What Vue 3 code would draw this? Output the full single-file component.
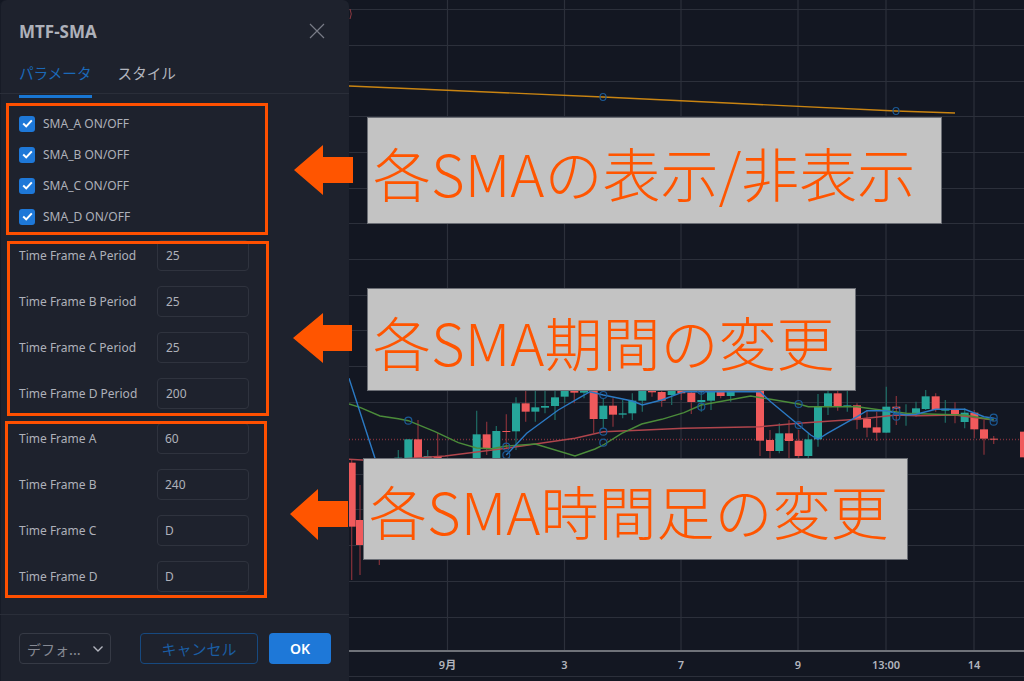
<script setup>
const checks = ['SMA_A ON/OFF', 'SMA_B ON/OFF', 'SMA_C ON/OFF', 'SMA_D ON/OFF']
const periods = [['Time Frame A Period', '25'], ['Time Frame B Period', '25'], ['Time Frame C Period', '25'], ['Time Frame D Period', '200']]
const frames = [['Time Frame A', '60'], ['Time Frame B', '240'], ['Time Frame C', 'D'], ['Time Frame D', 'D']]

const gridX = [447.5, 564.5, 681, 798, 886, 974]
const gridY = [9, 45, 81, 116, 152, 188, 223, 259, 295, 330, 366, 402, 474, 509, 545, 581, 617]
const ticks = [['9月', 447.5], ['3', 564.5], ['7', 681], ['9', 798], ['13:00', 886], ['14', 974]]

// [x, bodyTop, bodyBottom, wickTop, wickBottom, up] in crop units (3x), origin per block
const raw3 = [
  [20, 278, 470, 270, 630, 0], [45, 450, 525, 345, 615, 0], [103, 500, 520, 500, 585, 0],
  [160, 263, 280, 240, 280, 1], [190, 208, 280, 208, 280, 1], [219, 208, 280, 150, 280, 0],
  [248, 258, 280, 240, 280, 1], [278, 258, 280, 190, 280, 0], [395, 193, 280, 122, 280, 1],
  [425, 193, 235, 155, 255, 0], [454, 183, 280, 168, 280, 1], [484, 183, 186, 133, 235, 0],
  [513, 100, 184, 82, 240, 1], [542, 100, 125, 60, 155, 0], [571, 112, 125, 60, 155, 1],
  [600, 108, 113, 60, 130, 1], [630, 82, 108, 60, 150, 1], [659, 50, 80, 50, 100, 1],
  [688, 50, 68, 50, 100, 0], [717, 50, 68, 50, 85, 1], [746, 50, 147, 50, 190, 0],
  [775, 107, 147, 85, 175, 1], [804, 107, 134, 85, 170, 0], [833, 130, 134, 90, 145, 1],
  [862, 92, 130, 70, 150, 1], [892, 50, 92, 50, 125, 1], [921, 50, 67, 50, 80, 0],
  [950, 66, 92, 50, 110, 0], [980, 50, 75, 50, 105, 1], [1009, 50, 70, 50, 90, 0]
]
const raw4 = [
  [22, 68, 96, 50, 132, 0], [52, 90, 96, 50, 125, 1], [81, 50, 92, 50, 120, 1], [110, 50, 78, 50, 85, 0],
  [140, 50, 78, 50, 95, 1], [228, 50, 212, 50, 258, 0], [258, 210, 243, 180, 280, 0], [286, 190, 243, 160, 250, 1],
  [315, 190, 213, 150, 280, 0], [344, 212, 258, 180, 280, 0], [373, 208, 258, 190, 280, 1], [402, 108, 208, 72, 230, 1],
  [432, 70, 110, 50, 135, 1], [461, 70, 110, 50, 122, 0], [490, 106, 110, 50, 125, 1], [519, 106, 148, 100, 178, 0],
  [549, 147, 173, 120, 202, 0], [578, 172, 188, 125, 213, 0], [607, 110, 188, 50, 188, 1], [637, 110, 116, 78, 165, 0],
  [666, 133, 137, 103, 167, 1], [696, 115, 133, 95, 140, 1], [725, 79, 117, 60, 120, 1], [755, 79, 120, 70, 125, 0],
  [784, 116, 122, 90, 158, 1], [813, 118, 132, 97, 160, 0], [842, 128, 156, 115, 175, 1], [871, 128, 178, 120, 205, 0],
  [900, 178, 206, 150, 254, 0], [929, 206, 208, 198, 222, 0], [1020, 185, 262, 185, 262, 0]
]
const conv = (r, ox) => ({
  x: ox + r[0] / 3,
  top: 370 + r[1] / 3,
  h: Math.max((r[2] - r[1]) / 3, 1),
  wt: 370 + r[3] / 3,
  wb: 370 + r[4] / 3,
  up: !!r[5]
})
const candles = [...raw3.map(r => conv(r, 345)), ...raw4.map(r => conv(r, 684))]

const pts = (a3, a4) => [
  ...a3.map(p => `${(345 + p[0] / 3).toFixed(1)},${(370 + p[1] / 3).toFixed(1)}`),
  ...a4.map(p => `${(684 + p[0] / 3).toFixed(1)},${(370 + p[1] / 3).toFixed(1)}`)
].join(' ')

const blue = pts(
  [[12, 25], [90, 265], [300, 420]],
  []
)
const blue2 = pts(
  [[484, 255], [545, 190], [640, 120], [700, 85], [735, 65], [775, 75], [862, 93], [892, 105], [950, 90], [1017, 65]],
  [[228, 65], [260, 95], [344, 165], [380, 195], [402, 208], [430, 190], [519, 140], [549, 122], [607, 122], [637, 130], [666, 135], [696, 133], [755, 118], [842, 118], [900, 140], [929, 145]]
)
const green = pts(
  [[12, 102], [45, 112], [105, 138], [160, 146], [190, 152], [270, 185], [340, 218], [395, 234], [440, 236], [484, 228], [571, 222], [690, 258], [750, 237], [775, 225], [830, 190], [890, 162], [950, 148], [1017, 128]],
  [[52, 105], [200, 78], [260, 88], [344, 102], [373, 110], [519, 110], [607, 122], [666, 130], [755, 133], [842, 135], [929, 150]]
)
const red = pts(
  [[12, 268], [90, 272], [300, 258], [484, 235], [571, 222], [690, 205], [775, 185], [900, 180], [1017, 175]],
  [[228, 170], [344, 160], [519, 148], [637, 135], [700, 137], [813, 135], [929, 150]]
)
const circles = [
  ...[[190, 152], [484, 230], [484, 255], [775, 75], [775, 185], [775, 218]].map(p => [345 + p[0] / 3, 370 + p[1] / 3]),
  ...[[52, 110], [52, 62], [344, 102], [344, 165], [637, 123], [637, 140], [929, 143], [929, 155]].map(p => [684 + p[0] / 3, 370 + p[1] / 3])
]
</script>

<template>
  <div class="screen">
    <aside class="panel">
      <header class="head">
        <h1 class="title">MTF-SMA</h1>
        <svg class="close" width="16" height="16" viewBox="0 0 16 16"><path d="M1 1 15 15M15 1 1 15" /></svg>
      </header>
      <nav class="tabs">
        <span class="tab active">パラメータ</span>
        <span class="tab">スタイル</span>
      </nav>
      <div class="form">
        <ul class="checks">
          <li v-for="c in checks" :key="c" class="check">
            <span class="box">
              <svg width="11" height="9" viewBox="0 0 11 9"><path d="M1.2 4.6 4.2 7.4 9.8 1.4" /></svg>
            </span>
            <span>{{ c }}</span>
          </li>
        </ul>
        <div class="group first">
          <div v-for="p in periods" :key="p[0]" class="row">
            <span class="label">{{ p[0] }}</span>
            <span class="input">{{ p[1] }}</span>
          </div>
        </div>
        <div class="group second">
          <div v-for="p in frames" :key="p[0]" class="row">
            <span class="label">{{ p[0] }}</span>
            <span class="input tight">{{ p[1] }}</span>
          </div>
        </div>
      </div>
      <footer class="foot">
        <span class="select">
          <span>デフォ...</span>
          <svg width="12" height="8" viewBox="0 0 12 8"><path d="M1.5 1.5 6 6 10.5 1.5" /></svg>
        </span>
        <span class="btn cancel">キャンセル</span>
        <span class="btn ok">OK</span>
      </footer>
    </aside>

    <main class="chart">
      <svg class="plot" width="675" height="681" viewBox="349 0 675 681">
        <g class="grid">
          <line v-for="x in gridX" :key="x" :x1="x" :x2="x" y1="0" y2="651" />
          <line v-for="y in gridY" :key="y" x1="349" x2="1024" :y1="y + 0.5" :y2="y + 0.5" />
        </g>
        <line class="dots" x1="349" x2="1024" y1="439.5" y2="439.5" />
        <path class="arc" d="M350 9 Q352.5 14 350 19" />
        <g v-for="(c, i) in candles" :key="i">
          <line :class="c.up ? 'wick-up' : 'wick-down'" :x1="c.x" :x2="c.x" :y1="c.wt" :y2="c.wb" />
          <rect :class="c.up ? 'body-up' : 'body-down'" :x="c.x - 4" :y="c.top" width="8" :height="c.h" />
        </g>
        <polyline class="ln orange" points="349,86 603,97 896,111 955,113" />
        <polyline class="ln red" :points="red" />
        <polyline class="ln green" :points="green" />
        <polyline class="ln blue" :points="blue" />
        <polyline class="ln blue" :points="blue2" />
        <circle v-for="(c, i) in circles" :key="'c' + i" class="pt" :cx="c[0]" :cy="c[1]" r="3.5" />
        <ellipse class="pt" cx="603" cy="97" rx="3" ry="3.5" />
        <ellipse class="pt" cx="896" cy="111" rx="3" ry="3.5" />
        <rect class="axis" x="349" y="650" width="675" height="2" />
        <line class="grid-b" x1="349" x2="1024" y1="676.5" y2="676.5" />
        <text v-for="t in ticks" :key="t[0]" class="tick" :x="t[1]" y="669">{{ t[0] }}</text>
      </svg>
    </main>

    <div class="frame fa"></div>
    <div class="frame fb"></div>
    <div class="frame fc"></div>

    <svg class="arrows" width="1024" height="681" viewBox="0 0 1024 681">
      <polygon points="294,170 323,145 323,157 353,157 353,183 323,183 323,195" />
      <polygon points="293,338 323,313 323,325 352,325 352,351 323,351 323,363" />
      <polygon points="290,514 318,489 318,501 348,501 348,527 318,527 318,540" />
    </svg>

    <div class="note n1">各SMAの表示/非表示</div>
    <div class="note n2">各SMA期間の変更</div>
    <div class="note n3">各SMA時間足の変更</div>
  </div>
</template>

<style scoped>
.screen {
  position: relative;
  display: flex;
  width: 1024px;
  height: 681px;
  overflow: hidden;
  background: #131722;
  font-family: "Noto Sans", "Noto Sans CJK JP", sans-serif;
}
.panel {
  flex: 0 0 349px;
  display: flex;
  flex-direction: column;
  height: 681px;
  box-sizing: border-box;
  background: #1e222d;
  border-radius: 6px 6px 0 0;
  box-shadow: inset 1px 0 0 #171b26;
  color: #aeb1ba;
}
.head {
  flex: 0 0 62px;
  display: flex;
  align-items: center;
  justify-content: space-between;
  padding: 0 24px 0 19px;
}
.title {
  margin: 0;
  font-size: 17px;
  font-weight: 700;
  color: #aeb1ba;
}
.close path {
  fill: none;
  stroke: #787b86;
  stroke-width: 1.2;
}
.tabs {
  flex: 0 0 32px;
  display: flex;
  align-items: flex-start;
  gap: 26px;
  padding-left: 19px;
  border-bottom: 1px solid #2a2e39;
  box-sizing: border-box;
  font-family: "Noto Sans CJK JP", sans-serif;
  font-size: 14.6px;
  line-height: 22px;
}
.tab {
  position: relative;
  color: #b2b5be;
}
.tab.active {
  color: #1b69b8;
}
.tab.active::after {
  content: "";
  position: absolute;
  left: 0;
  right: 0;
  top: 33px;
  height: 3px;
  background: #1976d2;
}
.form {
  flex: 1;
  padding: 14px 0 0 19px;
}
.checks {
  display: flex;
  flex-direction: column;
  margin: 0;
  padding: 0;
  list-style: none;
}
.check {
  display: flex;
  align-items: center;
  gap: 8px;
  height: 31px;
  font-size: 12px;
}
.box {
  display: flex;
  align-items: center;
  justify-content: center;
  width: 16px;
  height: 16px;
  border-radius: 3px;
  background: #1e78d8;
}
.box path {
  fill: none;
  stroke: #fff;
  stroke-width: 2;
}
.group {
  display: flex;
  flex-direction: column;
  gap: 15px;
}
.group.first {
  margin-top: 8px;
}
.group.second {
  margin-top: 14px;
}
.row {
  display: flex;
  align-items: center;
  height: 31px;
}
.label {
  flex: 0 0 138px;
  font-size: 12px;
}
.input {
  flex: 0 0 92px;
  box-sizing: border-box;
  height: 31px;
  line-height: 29px;
  padding-left: 8px;
  border: 1px solid #2f333e;
  border-radius: 4px;
  font-size: 12px;
}
.input.tight {
  padding-left: 7px;
}
.foot {
  flex: 0 0 67px;
  box-sizing: border-box;
  display: flex;
  align-items: flex-start;
  padding: 18px 18px 0 19px;
  border-top: 1px solid #2a2e39;
  font-family: "Noto Sans CJK JP", "Noto Sans", sans-serif;
}
.select {
  display: flex;
  align-items: center;
  justify-content: space-between;
  box-sizing: border-box;
  width: 92px;
  height: 31px;
  padding: 0 6px 0 7px;
  border: 1px solid #363a45;
  border-radius: 4px;
  font-size: 14px;
  color: #868993;
}
.select path {
  fill: none;
  stroke: #b2b5be;
  stroke-width: 1.4;
}
.btn {
  display: flex;
  align-items: center;
  justify-content: center;
  box-sizing: border-box;
  height: 31px;
  border-radius: 4px;
  font-size: 15px;
}
.cancel {
  width: 118px;
  margin-left: 29px;
  border: 1px solid #17497f;
  color: #1b5da3;
}
.ok {
  width: 62px;
  margin-left: 11px;
  background: #1e78d8;
  color: #fff;
  font-family: "Noto Sans", sans-serif;
  font-weight: 600;
  font-size: 14px;
}
.chart {
  flex: 1;
  position: relative;
}
.plot {
  display: block;
}
.grid line, .grid-b {
  stroke: #2c303b;
  stroke-width: 1.2;
}
.dots {
  stroke: #7d303b;
  stroke-width: 1.5;
  stroke-dasharray: 1 2;
}
.arc {
  fill: none;
  stroke: #8f3a42;
}
.wick-up {
  stroke: #1e6660;
  stroke-width: 1.3;
}
.wick-down {
  stroke: #7d2f38;
  stroke-width: 1.3;
}
.body-up {
  fill: #26a69a;
}
.body-down {
  fill: #f05a5c;
}
.ln {
  fill: none;
  stroke-width: 1.4;
}
.orange { stroke: #c98412; }
.red { stroke: #b0454c; }
.green { stroke: #4b8c3a; }
.blue { stroke: #2b7ac4; }
.pt {
  fill: none;
  stroke: #1b5a96;
  stroke-width: 1.2;
}
.axis {
  fill: #6f7279;
}
.tick {
  fill: #b2b5be;
  font-size: 11px;
  font-weight: 600;
  text-anchor: middle;
  font-family: "Noto Sans", "Noto Sans CJK JP", sans-serif;
}
.frame {
  position: absolute;
  box-sizing: border-box;
  border: 3px solid #ff5000;
}
.fa { left: 6px; top: 103px; width: 262px; height: 132px; }
.fb { left: 7px; top: 241px; width: 262px; height: 175px; }
.fc { left: 5px; top: 421px; width: 262px; height: 177px; }
.arrows {
  position: absolute;
  left: 0;
  top: 0;
  pointer-events: none;
}
.arrows polygon {
  fill: #ff5500;
}
.note {
  position: absolute;
  box-sizing: border-box;
  display: flex;
  align-items: center;
  background: #c3c3c3;
  border: 1px solid #6b6e75;
  color: #ff5500;
  font-family: "Noto Sans CJK JP", sans-serif;
  font-weight: 300;
  font-size: 58px;
  white-space: nowrap;
}
.n1 { left: 367px; top: 117px; width: 575px; height: 107px; padding: 2px 0 0 5px; }
.n2 { left: 367px; top: 288px; width: 489px; height: 103px; padding: 2px 0 0 5px; }
.n3 { left: 363px; top: 458px; width: 545px; height: 102px; padding: 2px 0 0 5px; }
</style>
